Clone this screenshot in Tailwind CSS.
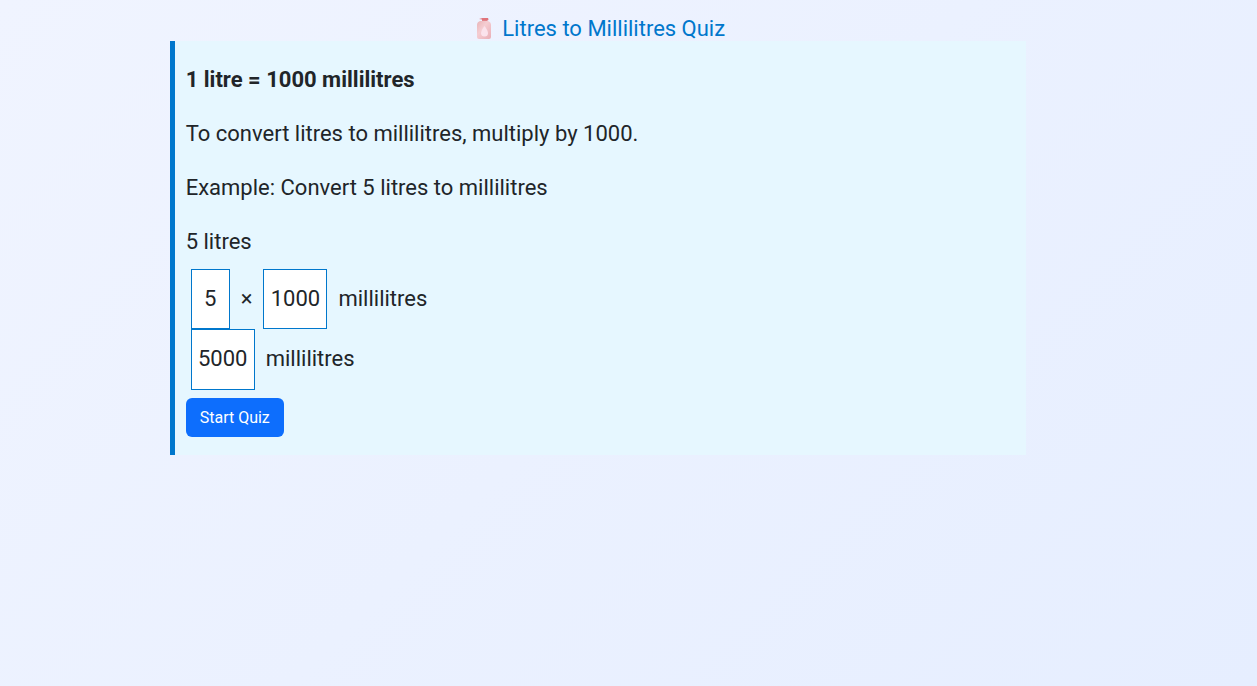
<!DOCTYPE html>
<html lang="en">
<head>
  <meta charset="UTF-8" />
  <meta name="viewport" content="width=device-width, initial-scale=1.0" />
  <title>Litres to Millilitres Quiz</title>
  <script src="https://cdn.jsdelivr.net/npm/@tailwindcss/browser@4"></script>
</head>
<body class="min-h-screen bg-linear-[135deg] from-[#f0f4ff] to-[#e6eeff] font-['Roboto',sans-serif] text-[22px] leading-[33px] text-[#212529]">
  <main class="mr-[18.4%] ml-[13.5%] pt-3">
    <h1 class="flex h-[29px] items-center justify-center gap-[10px] pt-1 pl-1 text-[#0077cc]">
      <svg class="h-6 w-[18px]" viewBox="0 0 18 24" aria-hidden="true">
        <defs>
          <linearGradient id="bottle" x1="0" y1="0" x2="1" y2="1">
            <stop offset="0" stop-color="#e8b4b8" />
            <stop offset="0.4" stop-color="#f5cdd2" />
            <stop offset="1" stop-color="#e9aeb6" />
          </linearGradient>
        </defs>
        <path d="M8 1h5v4H8z" fill="#e3949a" />
        <path d="M5 2Q8 .5 14 1q1 1 0 2.500H8V2.500z" fill="#e0737b" />
        <path d="M6 4h8q3 1 3 4v12q0 2-2 2H5q-2 0-2-2V8q0-3 3-4z" fill="url(#bottle)" />
        <path d="M10.500 9q3.500 4.500 3.500 7a3.500 3.500 0 0 1-7 0q0-2.500 3.500-7z" fill="#fbe3ec" />
      </svg>
      <span>Litres to Millilitres Quiz</span>
    </h1>

    <section class="border-l-5 border-[#0077cc] bg-[#e6f7ff] px-[11px] pt-[22px] pb-[18px]">
      <div class="space-y-[21px]">
        <p class="font-bold">1 litre = 1000 millilitres</p>
        <p>To convert litres to millilitres, multiply by 1000.</p>
        <p>Example: Convert 5 litres to millilitres</p>
        <p>5 litres</p>
      </div>

      <div class="mt-[11px] ml-[5px]">
        <div class="flex h-[60px] items-center gap-[11px]">
          <input type="text" value="5" aria-label="Litres" class="h-full w-[39px] border border-[#0077cc] bg-white pb-[2px] text-center" />
          <span class="pb-[2px]">×</span>
          <input type="text" value="1000" aria-label="Multiplier" class="h-full w-16 border border-[#0077cc] bg-white pb-[2px] text-center" />
          <span class="pb-[2px]">millilitres</span>
        </div>
        <div class="flex h-[61px] items-center gap-[11px]">
          <input type="text" value="5000" aria-label="Answer in millilitres" class="h-full w-16 border border-[#0077cc] bg-white pb-[2px] text-center" />
          <span class="pb-[2px]">millilitres</span>
        </div>
      </div>

      <button type="button" class="mt-2 block h-[39px] rounded-md bg-[#0d6efd] px-[14px] text-base text-white">Start Quiz</button>
    </section>
  </main>
</body>
</html>
